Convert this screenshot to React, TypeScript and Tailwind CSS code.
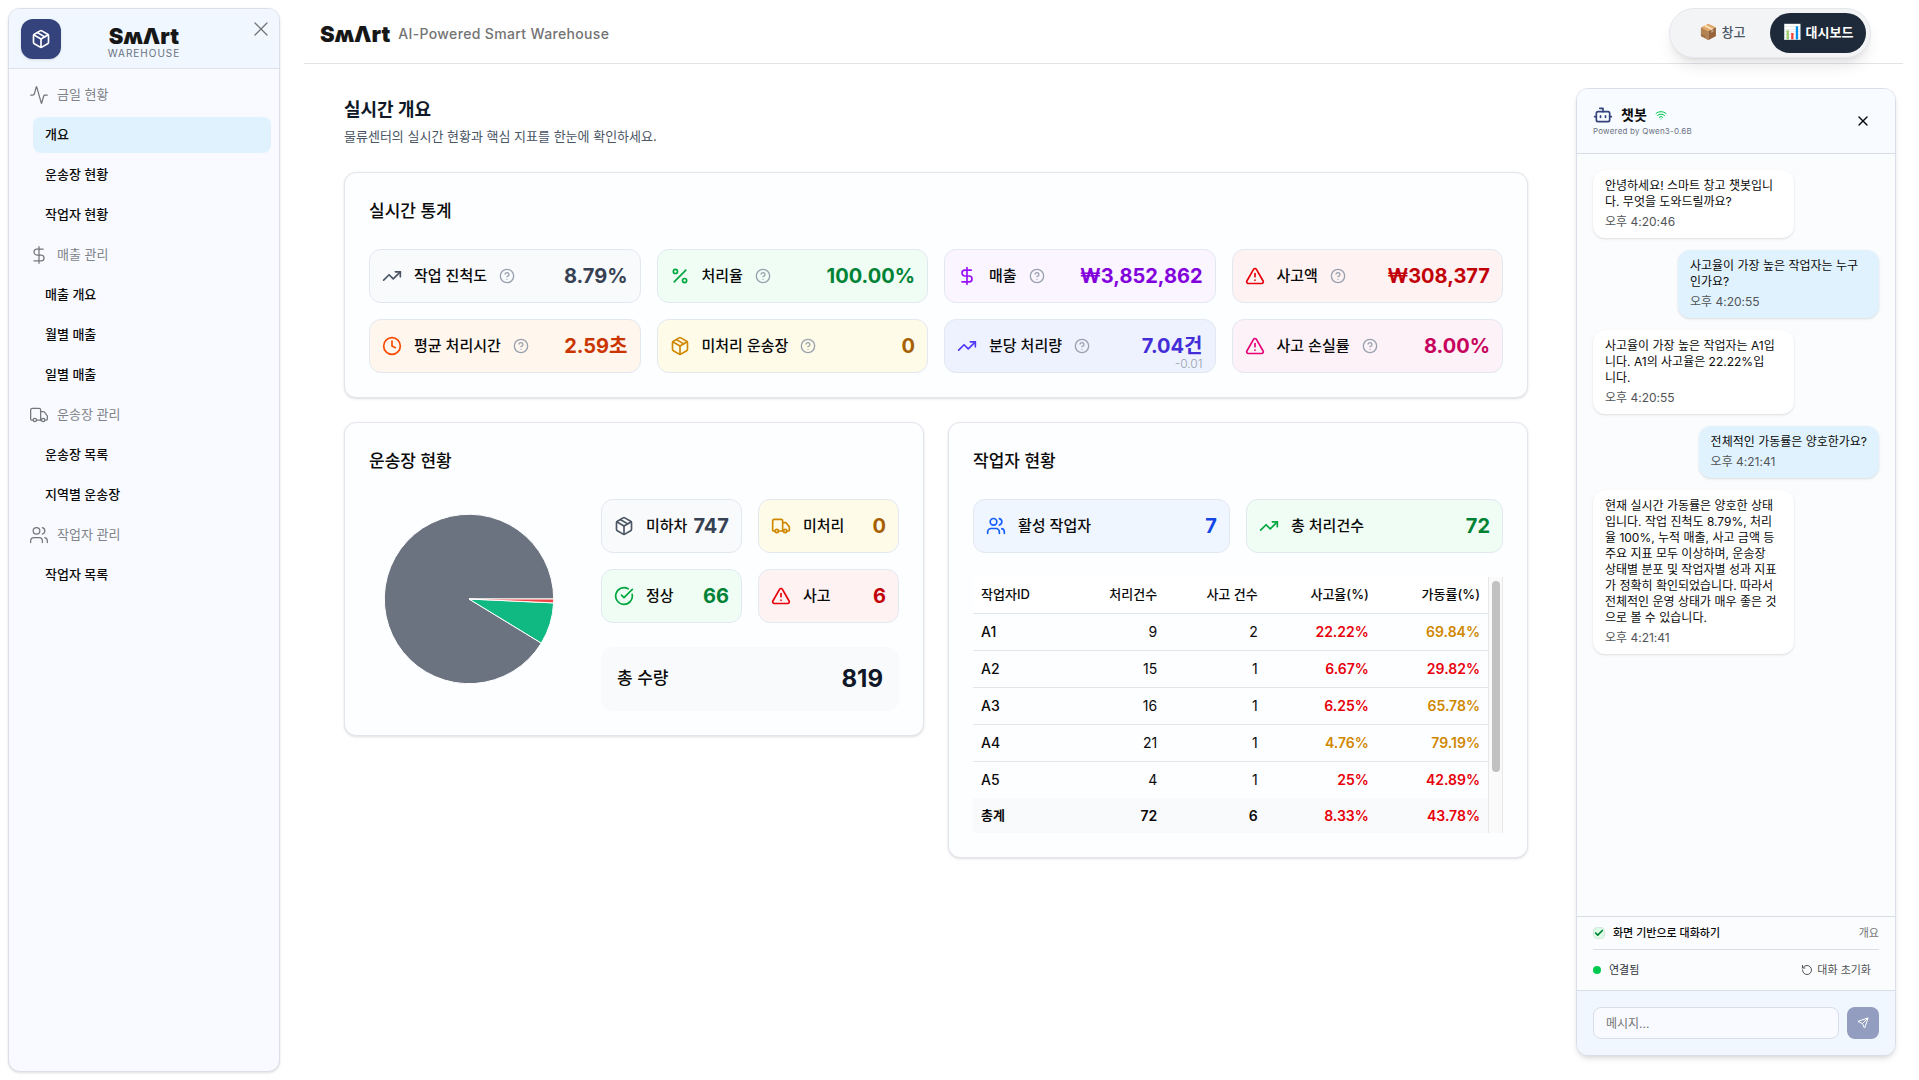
import React from "react";
import {
  Activity, AlertTriangle, Bot, CircleCheckBig, CircleHelp, Clock, DollarSign, Package, Percent,
  RotateCcw, Send, TrendingUp, Truck, Users, Wifi, X, Check,
} from "lucide-react";

type Icon = React.ComponentType<{ className?: string; strokeWidth?: number }>;

function Logo({ className }: { className: string }) {
  return (
    <span aria-label="SmArt" className={"whitespace-nowrap font-['Inter'] text-[22px] font-black text-[#171717] " + className}>
      SʍΛrt
    </span>
  );
}

const menu: { title: string; icon: Icon; items: string[] }[] = [
  { title: "금일 현황", icon: Activity, items: ["개요", "운송장 현황", "작업자 현황"] },
  { title: "매출 관리", icon: DollarSign, items: ["매출 개요", "월별 매출", "일별 매출"] },
  { title: "운송장 관리", icon: Truck, items: ["운송장 목록", "지역별 운송장"] },
  { title: "작업자 관리", icon: Users, items: ["작업자 목록"] },
];

function Sidebar() {
  return (
    <aside className="m-2 flex w-[272px] shrink-0 flex-col overflow-hidden rounded-xl border border-[#dbdfe8] bg-[#f9faff] shadow-sm">
      <div className="grid h-[60px] shrink-0 grid-cols-[40px_1fr_46px] items-center border-b border-[#dfe2e8] bg-[#f0f7ff] pl-3 pr-1.5">
        <button type="button" aria-label="창고" className="flex size-10 items-center justify-center rounded-xl bg-[#34437c] text-white shadow-sm">
          <Package className="size-5" />
        </button>
        <div className="flex flex-col items-center pt-1.5">
          <Logo className="leading-[22px]" />
          <span className="font-['Inter'] text-[10px] leading-3 tracking-widest text-gray-500">WAREHOUSE</span>
        </div>
        <button type="button" aria-label="닫기" className="mt-2 self-start justify-self-end text-[#737373]">
          <X className="size-6" strokeWidth={1.25} />
        </button>
      </div>
      <nav className="flex flex-col gap-1 p-2">
        {menu.map((group) => (
          <div key={group.title} className="flex flex-col gap-1">
            <div className="flex h-9 items-center gap-2 pl-3 text-[13px] text-[#808388]">
              <group.icon className="size-5 text-[#73767b]" strokeWidth={1.5} />
              {group.title}
            </div>
            {group.items.map((item) => (
              <button
                key={item}
                type="button"
                className={
                  "ml-4 h-9 rounded-lg px-3 text-left text-[13px] font-medium text-[#0a0a0a] " +
                  (item === "개요" ? "bg-[#e0f2fe]" : "")
                }
              >
                {item}
              </button>
            ))}
          </div>
        ))}
      </nav>
    </aside>
  );
}

function Header() {
  return (
    <header className="mr-4 flex h-16 shrink-0 items-center justify-between border-b border-[#e2e3e6] pl-4 pr-8 pt-0.5">
      <div className="flex items-center gap-2 pt-0.5">
        <Logo className="leading-8" />
        <span className="text-sm font-medium tracking-wide text-[#737373]">AI-Powered Smart Warehouse</span>
      </div>
      <div className="flex h-[50px] items-center rounded-full border border-gray-200 bg-gray-100 p-1 shadow-lg">
        <button type="button" className="flex h-10 w-24 items-center justify-center gap-1 rounded-full text-[13px] font-medium text-gray-600">
          <span className="text-[15px]">📦</span>창고
        </button>
        <button type="button" className="flex h-10 w-24 items-center justify-center gap-1 rounded-full bg-gray-800 text-[13px] font-bold text-white">
          <span className="text-[15px]">📊</span>대시보드
        </button>
      </div>
    </header>
  );
}

function Tile(props: { icon: Icon; label: string; value: string; box: string; ic: string; val: string; help?: boolean; note?: string }) {
  return (
    <div className={"relative flex h-[54px] items-center rounded-xl border border-[#e2e8f0] px-3 " + props.box}>
      <props.icon className={"mr-3 size-5 shrink-0 " + props.ic} />
      <span className="whitespace-nowrap text-[15px] font-medium text-[#0a0a0a]">{props.label}</span>
      {props.help && <CircleHelp className="ml-3 size-4 shrink-0 text-gray-400" />}
      <span className={"ml-auto text-xl leading-5 font-bold " + props.val}>{props.value}</span>
      {props.note && <span className="absolute bottom-0 right-3 text-xs leading-4 font-light text-gray-400">{props.note}</span>}
    </div>
  );
}

function Card({ title, children, className = "" }: { title: string; children: React.ReactNode; className?: string }) {
  return (
    <section className={"rounded-xl border border-[#e2e5ec] bg-[#fdfeff] p-6 shadow-sm " + className}>
      <h3 className="mb-6 text-[17px] leading-7 font-medium text-[#0a0a0a]">{title}</h3>
      {children}
    </section>
  );
}

function Pie() {
  return (
    <svg viewBox="0 0 172 172" className="size-[172px]" role="img" aria-label="운송장 분포">
      <g stroke="#fff" strokeWidth="1">
        <path d="M86 86 L158.3 130.1 A84.7 84.7 0 1 1 170.7 86 Z" fill="#6b7280" />
        <path d="M86 86 L170.6 89.9 A84.7 84.7 0 0 1 158.3 130.1 Z" fill="#10b981" />
        <path d="M86 86 L170.7 86 A84.7 84.7 0 0 1 170.6 89.9 Z" fill="#ef4444" />
      </g>
    </svg>
  );
}

const red = "text-[#e7000b]";
const amber = "text-[#d08700]";
const rows = [
  ["A1", "9", "2", "22.22%", red, "69.84%", amber],
  ["A2", "15", "1", "6.67%", red, "29.82%", red],
  ["A3", "16", "1", "6.25%", red, "65.78%", amber],
  ["A4", "21", "1", "4.76%", amber, "79.19%", amber],
  ["A5", "4", "1", "25%", red, "42.89%", red],
];

function WorkerTable() {
  return (
    <div className="mt-6 flex">
      <table className="flex-1 text-[13px]">
        <thead>
          <tr className="h-9 border-b border-[#e2e5ea] bg-white text-[#0a0a0a]">
            {["작업자ID", "처리건수", "사고 건수", "사고율(%)", "가동률(%)"].map((h, i) => (
              <th key={h} scope="col" className={"whitespace-nowrap px-2 font-medium " + (i === 0 ? "text-left" : "text-right")}>{h}</th>
            ))}
          </tr>
        </thead>
        <tbody>
          {rows.map((r, i) => (
            <tr key={r[0]} className={"h-[37px] text-sm text-[#0a0a0a] " + (i < 4 ? "border-b border-[#e2e5ea]" : "")}>
              <td className="px-2 font-medium">{r[0]}</td>
              <td className="px-2 text-right">{r[1]}</td>
              <td className="px-2 text-right">{r[2]}</td>
              <td className={"px-2 text-right font-semibold " + r[4]}>{r[3]}</td>
              <td className={"px-2 text-right font-semibold " + r[6]}>{r[5]}</td>
            </tr>
          ))}
        </tbody>
        <tfoot>
          <tr className="h-[35px] bg-[#f9fafb] text-sm font-semibold text-[#0a0a0a]">
            <td className="px-2 text-[13px]">총계</td>
            <td className="px-2 text-right">72</td>
            <td className="px-2 text-right">6</td>
            <td className={"px-2 text-right " + red}>8.33%</td>
            <td className={"px-2 text-right " + red}>43.78%</td>
          </tr>
        </tfoot>
      </table>
      <div className="flex w-[15px] shrink-0 justify-center border-x border-[#e8e8e8] bg-[#fafafa] pt-1">
        <div className="h-[191px] w-2 rounded-full bg-[#c1c1c1]" />
      </div>
    </div>
  );
}

function Overview() {
  return (
    <main className="flex min-w-0 flex-1 flex-col pl-10 pr-12 pt-8">
      <h2 className="text-lg leading-7 font-bold text-gray-900">실시간 개요</h2>
      <p className="text-[13px] leading-6 text-gray-600">물류센터의 실시간 현황과 핵심 지표를 한눈에 확인하세요.</p>
      <Card title="실시간 통계" className="mt-6">
        <div className="grid grid-cols-4 gap-4">
          <Tile help icon={TrendingUp} label="작업 진척도" value="8.79%" box="bg-[#f9fafb]" ic="text-gray-600" val="text-gray-700" />
          <Tile help icon={Percent} label="처리율" value="100.00%" box="bg-green-50" ic="text-green-600" val="text-green-700" />
          <Tile help icon={DollarSign} label="매출" value="₩3,852,862" box="bg-purple-50" ic="text-purple-600" val="text-purple-700" />
          <Tile help icon={AlertTriangle} label="사고액" value="₩308,377" box="bg-red-50" ic="text-red-600" val="text-red-700" />
          <Tile help icon={Clock} label="평균 처리시간" value="2.59초" box="bg-orange-50" ic="text-orange-600" val="text-orange-700" />
          <Tile help icon={Package} label="미처리 운송장" value="0" box="bg-yellow-50" ic="text-yellow-600" val="text-yellow-700" />
          <Tile help icon={TrendingUp} label="분당 처리량" value="7.04건" box="bg-indigo-50" ic="text-indigo-600" val="text-indigo-700" note="-0.01" />
          <Tile help icon={AlertTriangle} label="사고 손실률" value="8.00%" box="bg-pink-50" ic="text-pink-600" val="text-pink-700" />
        </div>
      </Card>
      <div className="mt-6 grid grid-cols-2 items-start gap-6">
        <Card title="운송장 현황">
          <div className="flex gap-8">
            <div className="flex flex-1 items-center justify-center pb-3">
              <Pie />
            </div>
            <div className="grid w-[298px] grid-cols-2 gap-4">
              <Tile icon={Package} label="미하차" value="747" box="bg-[#f9fafb]" ic="text-gray-600" val="text-gray-700" />
              <Tile icon={Truck} label="미처리" value="0" box="bg-yellow-50" ic="text-yellow-600" val="text-yellow-700" />
              <Tile icon={CircleCheckBig} label="정상" value="66" box="bg-green-50" ic="text-green-600" val="text-green-700" />
              <Tile icon={AlertTriangle} label="사고" value="6" box="bg-red-50" ic="text-red-600" val="text-red-700" />
              <div className="col-span-2 mt-2 flex h-16 items-center justify-between rounded-xl bg-[#f9fafb] px-4">
                <span className="text-[17px] font-medium text-[#0a0a0a]">총 수량</span>
                <span className="text-2xl font-bold text-gray-900">819</span>
              </div>
            </div>
          </div>
        </Card>
        <Card title="작업자 현황">
          <div className="grid grid-cols-2 gap-4">
            <Tile icon={Users} label="활성 작업자" value="7" box="bg-blue-50" ic="text-blue-600" val="text-blue-700" />
            <Tile icon={TrendingUp} label="총 처리건수" value="72" box="bg-green-50" ic="text-green-600" val="text-green-700" />
          </div>
          <WorkerTable />
        </Card>
      </div>
    </main>
  );
}

const messages = [
  { me: false, lines: ["안녕하세요! 스마트 창고 챗봇입니", "다. 무엇을 도와드릴까요?"], time: "오후 4:20:46" },
  { me: true, lines: ["사고율이 가장 높은 작업자는 누구", "인가요?"], time: "오후 4:20:55" },
  { me: false, lines: ["사고율이 가장 높은 작업자는 A1입", "니다. A1의 사고율은 22.22%입", "니다."], time: "오후 4:20:55" },
  { me: true, lines: ["전체적인 가동률은 양호한가요?"], time: "오후 4:21:41" },
  {
    me: false,
    lines: ["현재 실시간 가동률은 양호한 상태", "입니다. 작업 진척도 8.79%, 처리", "율 100%, 누적 매출, 사고 금액 등", "주요 지표 모두 이상하며, 운송장", "상태별 분포 및 작업자별 성과 지표", "가 정확히 확인되었습니다. 따라서", "전체적인 운영 상태가 매우 좋은 것", "으로 볼 수 있습니다."],
    time: "오후 4:21:41",
  },
];

function Chat() {
  return (
    <aside className="mb-6 mr-[23px] mt-6 flex w-80 shrink-0 flex-col overflow-hidden rounded-xl border border-[#d9dee8] bg-[#fbfcfe] shadow-md">
      <div className="flex h-[65px] shrink-0 items-center justify-between border-b border-[#d9dee5] bg-[#f8fbff] px-4">
        <div>
          <div className="flex items-center gap-2 text-sm leading-5 font-semibold text-[#0a0a0a]">
            <Bot className="size-5 text-[#34437c]" />
            챗봇
            <Wifi className="size-3 text-[#00c950]" />
          </div>
          <div className="text-[8px] leading-3 tracking-wide text-gray-500">Powered by Qwen3-0.6B</div>
        </div>
        <button type="button" aria-label="챗봇 닫기" className="mr-2 text-[#0a0a0a]">
          <X className="size-4" />
        </button>
      </div>
      <div className="flex flex-1 flex-col gap-3 p-4">
        {messages.map((m, i) => (
          <div
            key={i}
            className={
              "rounded-xl px-3 py-2 shadow-sm " +
              (m.me ? "self-end bg-[#e0f2fe] " : "bg-white ") +
              (m.lines.length > 1 ? "w-[201px]" : "")
            }
          >
            <p className="text-xs leading-4 text-[#0a0a0a]">
              {m.lines.map((l) => (
                <span key={l} className="block whitespace-nowrap">{l}</span>
              ))}
            </p>
            <time className="mt-1 block text-xs leading-4 text-[#525558]">{m.time}</time>
          </div>
        ))}
      </div>
      <div className="border-t border-[#d9dee5] px-4">
        <div className="flex h-[33px] items-center justify-between border-b border-[#d9dee5]">
          <label className="flex items-center gap-2 text-[11px] font-medium text-[#0a0a0a]">
            <span className="relative flex size-3 items-center justify-center">
              <input type="checkbox" defaultChecked className="size-3 appearance-none rounded-sm border border-[#d5e8dc] bg-[#dcfce7]" />
              <Check className="pointer-events-none absolute size-2.5 text-[#008236]" strokeWidth={4} />
            </span>
            화면 기반으로 대화하기
          </label>
          <span className="text-[11px] text-[#737373]">개요</span>
        </div>
        <div className="flex h-10 items-center justify-between text-[11px] text-[#303338]">
          <span className="flex items-center gap-2">
            <span className="size-2 rounded-full bg-[#00c950]" />
            연결됨
          </span>
          <button type="button" className="mr-2 flex items-center gap-1 text-[#525558]">
            <RotateCcw className="size-3" />
            대화 초기화
          </button>
        </div>
      </div>
      <form className="flex gap-2 border-t border-[#d9dee5] bg-[#f0f7ff] p-4" onSubmit={(e) => e.preventDefault()}>
        <input aria-label="메시지" placeholder="메시지..." className="h-8 min-w-0 flex-1 rounded-lg border border-[#d9dee8] bg-[#f9faff] px-3 text-xs placeholder:text-[#737373]" />
        <button type="submit" aria-label="보내기" className="flex size-8 items-center justify-center rounded-lg bg-[#929dbf] text-white">
          <Send className="size-3" />
        </button>
      </form>
    </aside>
  );
}

export default function App() {
  return (
    <div className="flex min-h-screen bg-white font-['Inter','Noto_Sans_CJK_KR',sans-serif]">
      <Sidebar />
      <div className="ml-4 flex min-w-0 flex-1 flex-col">
        <Header />
        <div className="flex min-h-0 flex-1">
          <Overview />
          <Chat />
        </div>
      </div>
    </div>
  );
}
